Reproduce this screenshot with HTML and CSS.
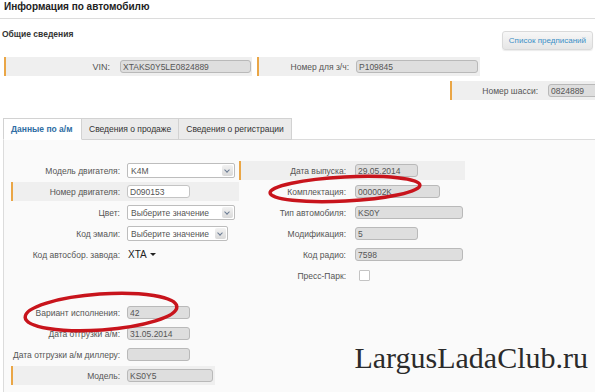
FILE: index.html
```html
<!DOCTYPE html>
<html lang="ru">
<head>
  <meta charset="UTF-8">
  <title>Информация по автомобилю</title>
  <link rel="stylesheet" href="styles.css">
</head>
<body>
  <div class="page">
    <h1 class="title">Информация по автомобилю</h1>

    <!-- Общие сведения -->
    <div class="general-head">
      <h2>Общие сведения</h2>
      <button class="btn-orders" type="button">Список предписаний</button>
    </div>

    <div class="top-row">
      <div class="band band-vin">
        <span class="label lbl-vin">VIN:</span>
        <input class="field" style="width: 131px" value="XTAKS0Y5LE0824889" readonly>
      </div>
      <div class="band band-part">
        <span class="label lbl-part">Номер для з/ч:</span>
        <input class="field" style="width: 122px" value="P109845" readonly>
      </div>
    </div>
    <div class="top-row end">
      <div class="band band-chassis">
        <span class="label lbl-chassis">Номер шасси:</span>
        <input class="field" style="width: 50px" value="0824889" readonly>
      </div>
    </div>

    <!-- Вкладки -->
    <div class="tabs">
      <div class="tab active">Данные по а/м</div>
      <div class="tab">Сведения о продаже</div>
      <div class="tab">Сведения о регистрации</div>
      <div class="tab-rest"></div>
    </div>

    <div class="panel">
      <div class="col col-left">
        <div class="row">
          <span class="label">Модель двигателя:</span>
          <div class="select" style="width: 108px"><span>K4M</span><i class="arrow"></i></div>
        </div>
        <div class="row band">
          <span class="label">Номер двигателя:</span>
          <input class="field editable" style="width: 63px" value="D090153">
        </div>
        <div class="row">
          <span class="label">Цвет:</span>
          <div class="select" style="width: 108px"><span>Выберите значение</span><i class="arrow"></i></div>
        </div>
        <div class="row">
          <span class="label">Код эмали:</span>
          <div class="select" style="width: 101px"><span>Выберите значение</span><i class="arrow"></i></div>
        </div>
        <div class="row">
          <span class="label">Код автосбор. завода:</span>
          <span class="plant">XTA <b class="caret"></b></span>
        </div>

        <div class="row spaced">
          <span class="label">Вариант исполнения:</span>
          <input class="field" style="width: 63px" value="42" readonly>
        </div>
        <div class="row">
          <span class="label">Дата отгрузки а/м:</span>
          <input class="field" style="width: 63px" value="31.05.2014" readonly>
        </div>
        <div class="row">
          <span class="label">Дата отгрузки а/м диллеру:</span>
          <input class="field" style="width: 63px" value="" readonly>
        </div>
        <div class="row band band-short">
          <span class="label">Модель:</span>
          <input class="field" style="width: 86px" value="KS0Y5" readonly>
        </div>
      </div>

      <div class="col col-right">
        <div class="row band">
          <span class="label">Дата выпуска:</span>
          <input class="field" style="width: 63px" value="29.05.2014" readonly>
        </div>
        <div class="row">
          <span class="label">Комплектация:</span>
          <input class="field" style="width: 85px" value="000002K" readonly>
        </div>
        <div class="row">
          <span class="label">Тип автомобиля:</span>
          <input class="field" style="width: 108px" value="KS0Y" readonly>
        </div>
        <div class="row">
          <span class="label">Модификация:</span>
          <input class="field" style="width: 63px" value="5" readonly>
        </div>
        <div class="row">
          <span class="label">Код радио:</span>
          <input class="field" style="width: 108px" value="7598" readonly>
        </div>
        <div class="row">
          <span class="label">Пресс-Парк:</span>
          <span class="check"></span>
        </div>
      </div>
    </div>

    <!-- пометки поверх скриншота -->
    <svg class="marks" width="595" height="392" viewBox="0 0 595 392">
      <ellipse cx="345" cy="189" rx="75" ry="12" transform="rotate(-3 345 189)"></ellipse>
      <ellipse cx="101" cy="312" rx="76" ry="18" transform="rotate(-4 101 312)"></ellipse>
    </svg>
    <div class="watermark">LargusLadaClub.ru</div>
  </div>
</body>
</html>
```

FILE: styles.css
```css
body {
  margin: 0;
  background-color: #fff;
  font-family: 'Liberation Sans', Arial, sans-serif;
  color: #444;
  overflow: hidden;
}
.page {
  position: relative;
  width: 595px;
  height: 392px;
  overflow: hidden;
}
.title {
  margin: 0;
  padding: 1px 4px 0;
  height: 17px;
  font-size: 10px;
  line-height: 12px;
  color: #222;
  border-bottom: 1px solid #dcdcdc;
}
.general-head {
  display: flex;
  justify-content: space-between;
  align-items: flex-start;
  padding: 0 2px;
}
.general-head h2 {
  margin: 9px 0 0;
  font-size: 8.5px;
  line-height: 12px;
  color: #333;
}
.btn-orders {
  margin-top: 12px;
  height: 19px;
  padding: 0 6px;
  font-family: inherit;
  font-size: 8px;
  color: #3b8fc6;
  background: linear-gradient(#f7f7f7, #e6e6e6);
  border: 1px solid #dadada;
  border-radius: 3px;
  box-shadow: 0 1px 1px rgba(0, 0, 0, 0.08);
}
.top-row {
  display: flex;
  gap: 5px;
  padding-left: 4px;
  margin-top: 7px;
}
.top-row.end {
  justify-content: flex-end;
  margin-top: 5px;
}
.band {
  display: flex;
  align-items: center;
  height: 19px;
  background-color: #efefef;
  border-left: 2px solid #eaa646;
  box-sizing: border-box;
  overflow: hidden;
}
.band-vin {
  width: 248px;
}
.band-part {
  width: 223px;
}
.band-chassis {
  width: 145px;
}
.label {
  flex: none;
  text-align: right;
  font-size: 8.5px;
  color: #555;
  white-space: nowrap;
}
.lbl-vin {
  width: 104px;
  margin-right: 10px;
  font-size: 9px;
}
.lbl-part {
  width: 90px;
  margin-right: 7px;
}
.lbl-chassis {
  width: 86px;
  margin-right: 10px;
}
.field {
  flex: none;
  box-sizing: border-box;
  height: 13px;
  margin: 0;
  padding: 0 2px;
  font-family: inherit;
  font-size: 8.5px;
  color: #555;
  background-color: #dedede;
  border: 1px solid #b9b9b9;
  border-radius: 3px;
  outline: none;
}
.field.editable {
  background-color: #fff;
  border-color: #c4c4c4;
}
.tabs {
  display: flex;
  margin-top: 18px;
  padding-left: 3px;
  height: 22px;
}
.tab {
  box-sizing: border-box;
  padding: 0 7px;
  line-height: 21px;
  font-size: 8.5px;
  color: #333;
  background-color: #ebebeb;
  border: 1px solid #d2d2d2;
  border-left: none;
  white-space: nowrap;
}
.tab:first-child {
  border-left: 1px solid #d2d2d2;
}
.tab.active {
  width: 79px;
  background-color: #fff;
  border-bottom-color: #fff;
  color: #2f6da3;
  font-weight: bold;
}
.tab-rest {
  flex: 1;
  border-bottom: 1px solid #dcdcdc;
}
.panel {
  display: flex;
  margin-left: 3px;
  padding: 21px 0 0 7px;
  height: 260px;
  background-color: #fafafa;
  border-left: 1px solid #dcdcdc;
}
.col {
  display: flex;
  flex-direction: column;
  gap: 2px;
}
.col-left {
  width: 228px;
}
.col-right {
  width: 226px;
}
.row {
  display: flex;
  align-items: center;
  height: 19px;
}
.row.band-short {
  width: 204px;
}
.col-left .label {
  width: 107px;
  margin-right: 7px;
}
.col-left .row:not(.band) .label {
  margin-left: 2px;
}
.col-right .label {
  width: 105px;
  margin-right: 9px;
}
.col-right .row:not(.band) .label {
  margin-left: 2px;
}
.row.spaced {
  margin-top: 37px;
}
.select {
  display: flex;
  align-items: center;
  justify-content: space-between;
  box-sizing: border-box;
  height: 15px;
  padding-left: 3px;
  font-size: 8.5px;
  color: #555;
  background-color: #fff;
  border: 1px solid #bdbdbd;
  border-radius: 2px;
}
.arrow {
  position: relative;
  width: 11px;
  height: 11px;
  margin-right: 1px;
  background: linear-gradient(#f2f2f2, #d9d9d9);
  border-radius: 2px;
}
.arrow::after {
  content: "";
  position: absolute;
  left: 3px;
  top: 3px;
  width: 3px;
  height: 3px;
  border-right: 1.5px solid #6b7c93;
  border-bottom: 1.5px solid #6b7c93;
  transform: rotate(45deg);
}
.plant {
  display: flex;
  align-items: center;
  gap: 3px;
  margin-left: 1px;
  font-size: 10px;
  color: #222;
}
.caret {
  width: 0;
  height: 0;
  border-left: 3px solid transparent;
  border-right: 3px solid transparent;
  border-top: 3px solid #222;
}
.check {
  width: 9px;
  height: 9px;
  margin-left: 4px;
  background-color: #fff;
  border: 1px solid #c4c4c4;
  border-radius: 1px;
}
.marks {
  position: absolute;
  left: 0;
  top: 0;
  pointer-events: none;
}
.marks ellipse {
  fill: none;
  stroke: #c8141c;
  stroke-width: 3.5;
}
.watermark {
  position: absolute;
  right: 7px;
  top: 338px;
  font-family: 'Liberation Serif', 'Times New Roman', serif;
  font-size: 30px;
  line-height: 40px;
  color: #2b2b2b;
}
```
